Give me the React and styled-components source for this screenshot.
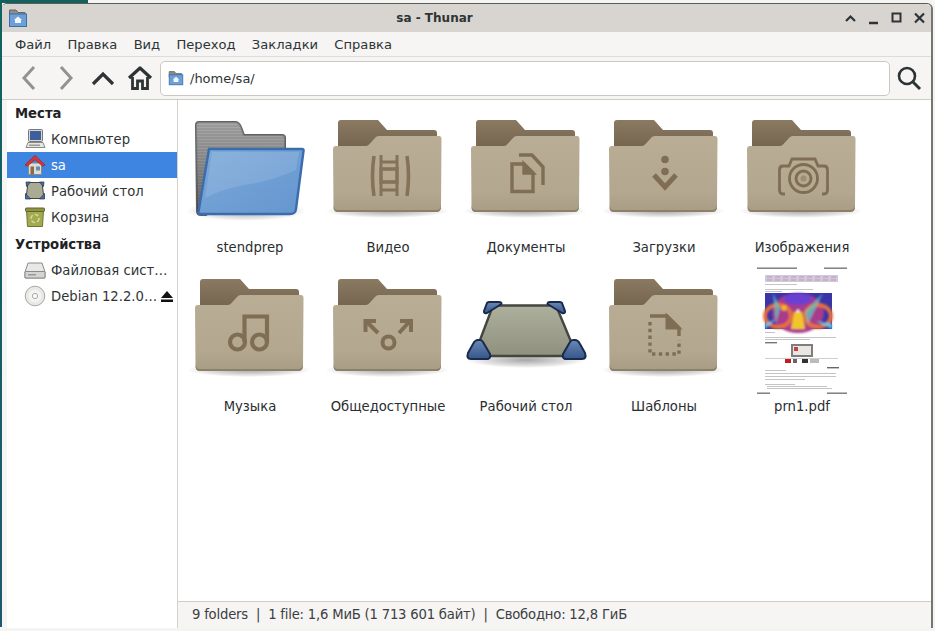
import React from 'react';
import styled, { createGlobalStyle } from 'styled-components';

const Global = createGlobalStyle`
  html, body { margin: 0; padding: 0; height: 100%; overflow: hidden; }
  body { background: #f4f4f2; font-family: "DejaVu Sans", sans-serif; }
  #root { height: 100%; }
`;

const Desktop = styled.div`
  width: 935px; height: 631px; box-sizing: border-box; padding: 3px 2px 4px 2px;
  background:
    linear-gradient(#11615f, #11615f) 0 0 / 88px 3px no-repeat,
    linear-gradient(#12625f, #1b5a6e) 0 0 / 2px 627px no-repeat;
`;
const Win = styled.div`
  height: 100%; display: flex; flex-direction: column; background: #f6f5f4;
  border-top: 1px solid #5e5c58; border-top-left-radius: 5px; border-top-right-radius: 6px;
  border-right: 2px solid #77756f; overflow: hidden;
`;
const TitleBar = styled.div`
  height: 28px; flex: none; background: #d8d4d0; display: flex; align-items: center;
  padding: 0 4px 0 6px; color: #2e3436;
`;
const Title = styled.div`flex: 1; text-align: center; font-size: 12px; font-weight: 700; color: #2e3436; padding-right: 2px;`;
const Ctl = styled.div`display: flex; gap: 8px; align-items: center;`;
const Menu = styled.div`
  height: 25px; flex: none; display: flex; align-items: center; gap: 16.3px; padding: 0 0 0 13px;
  font-size: 13.1px; color: #2e3436; border-bottom: 1px solid #dedcd9; box-sizing: border-box;
`;
const Toolbar = styled.div`
  height: 43px; flex: none; display: flex; align-items: center; padding: 0 4px 0 8px;
  border-bottom: 1px solid #cfccc7; box-sizing: border-box;
`;
const Tool = styled.div`width: 37px; height: 30px; display: flex; align-items: center; justify-content: center; flex: none;`;
const PathBox = styled.div`
  flex: 1; height: 35px; margin-left: 2px; box-sizing: border-box; background: #fff; border: 1px solid #cdc7c2; border-radius: 5px;
  display: flex; align-items: center; gap: 6px; padding-left: 7px; font-size: 13px; color: #2e3436;
`;
const Body = styled.div`flex: 1; min-height: 0; display: flex;`;
const Side = styled.div`width: 170px; margin-left: 5px; flex: none; background: #fff; border-right: 1px solid #d5d2ce;`;
const Head = styled.div`
  height: 26px; margin-top: ${p => p.$gap || 0}px; display: flex; align-items: center; padding-left: 8px;
  font-size: 13.2px; font-weight: 700; color: #1e2224;
`;
const Row = styled.div`
  height: 26px; display: flex; align-items: center; padding-left: 19px; gap: 5px; font-size: 13.2px;
  color: ${p => (p.$sel ? '#fff' : '#2e3436')}; background: ${p => (p.$sel ? '#3d85e0' : 'transparent')};
  white-space: nowrap; position: relative;
`;
const Eject = styled.div`position: absolute; right: 3px; top: 7px; display: flex;`;
const Ico = styled.span`width: 22px; height: 22px; flex: none; display: flex; margin-left: -2px;`;
const Main = styled.div`flex: 1; min-width: 0; display: flex; flex-direction: column; background: #fff;`;
const Grid = styled.div`
  flex: 1; display: grid; grid-template-columns: repeat(5, 138px); grid-auto-rows: 159px; padding: 15px 0 0 3px; align-content: start;
`;
const Cell = styled.div`display: flex; flex-direction: column; align-items: center;`;
const IconBox = styled.div`width: 128px; height: 110px; display: flex; flex: none;`;
const Label = styled.div`font-size: 13.2px; color: #2a2e30; margin-top: 15px; line-height: 16px; white-space: nowrap; position: relative;`;
const Status = styled.div`
  height: 27px; flex: none; box-sizing: border-box; border-top: 1px solid #cfccc7; background: #f6f5f4; display: flex; align-items: center;
  padding: 0 0 2px 14px; font-size: 13.2px; color: #3b4042; letter-spacing: -0.2px; white-space: nowrap;
`;

const Defs = () => (
  <svg width="0" height="0" style={{ position: 'absolute' }}>
    <defs>
      <linearGradient id="ffront" x1="0" y1="0" x2="0" y2="1">
        <stop offset="0" stopColor="#baad96" /><stop offset=".75" stopColor="#b4a78f" /><stop offset="1" stopColor="#a99c85" />
      </linearGradient>
      <linearGradient id="fback" x1="0" y1="0" x2="0" y2="1">
        <stop offset="0" stopColor="#8a7a62" /><stop offset="1" stopColor="#6f5f49" />
      </linearGradient>
      <radialGradient id="shadow"><stop offset="0" stopColor="#000" stopOpacity=".35" /><stop offset=".7" stopColor="#000" stopOpacity=".12" /><stop offset="1" stopColor="#000" stopOpacity="0" /></radialGradient>
      <linearGradient id="bluef" x1="0" y1="0" x2="1" y2="1">
        <stop offset="0" stopColor="#7ba8d8" /><stop offset=".6" stopColor="#6d9dd3" /><stop offset="1" stopColor="#6596ce" />
      </linearGradient>
      <linearGradient id="desk" x1="0" y1="0" x2="0" y2="1">
        <stop offset="0" stopColor="#aeb09e" /><stop offset="1" stopColor="#8f917e" />
      </linearGradient>
      <linearGradient id="cblue" x1="0" y1="0" x2="0" y2="1">
        <stop offset="0" stopColor="#6a89b5" /><stop offset="1" stopColor="#36558a" />
      </linearGradient>
      <pattern id="stripes" width="4" height="3" patternUnits="userSpaceOnUse">
        <rect width="4" height="3" fill="#7f7f7f" /><rect width="4" height="1" fill="#909090" />
      </pattern>
      <linearGradient id="greyshade" x1="0" y1="0" x2="0" y2="1">
        <stop offset="0" stopColor="#fff" stopOpacity=".22" /><stop offset="1" stopColor="#000" stopOpacity=".3" />
      </linearGradient>
      <filter id="blur1"><feGaussianBlur stdDeviation=".5" /></filter>
      <filter id="blur2"><feGaussianBlur stdDeviation=".9" /></filter>
    </defs>
  </svg>
);

const GC = '#7f6e54';
const glyphs = {
  video: (
    <g fill="none" stroke={GC} strokeWidth="3.6" opacity=".9">
      <path d="M50 41 Q47 61 50 81M83 41 Q86 61 83 81" />
      <path d="M57 40 V53M73 40 V53M57 68 V81M73 68 V81M57 47 H73M57 75 H73" strokeWidth="3" />
      <rect x="57" y="54" width="16" height="13" />
    </g>
  ),
  docs: (
    <g fill="none" stroke={GC} strokeWidth="3.4">
      <path d="M50 49 H62 L71 58 V76.5 H50 Z" />
      <path d="M62 49 V58 H71 Z" fill={GC} />
      <path d="M57 40 H70 L81 52 V70" />
    </g>
  ),
  down: (
    <g fill={GC}>
      <circle cx="65" cy="44.5" r="3.8" /><circle cx="65" cy="56.5" r="3.8" />
      <path d="M54 60 L65 72 L76 60" fill="none" stroke={GC} strokeWidth="5" />
    </g>
  ),
  photo: (
    <g fill="none" stroke={GC} strokeWidth="2.8">
      <path d="M47 79 H45 Q41.500 79 41.500 75 V55 Q41.500 51 45 51 H51 L54 44 H77 L80 51 H86 Q89.500 51 89.500 55 V75 Q89.500 79 86 79 H84" />
      <circle cx="65.500" cy="63.500" r="14" /><circle cx="65.500" cy="63.500" r="7.500" strokeWidth="3" />
      <circle cx="65.500" cy="63.500" r="3" fill={GC} opacity=".45" stroke="none" />
    </g>
  ),
  music: (
    <g fill="none" stroke={GC} strokeWidth="4.2">
      <circle cx="51.500" cy="68" r="7.500" /><circle cx="73.500" cy="68" r="7.500" />
      <path d="M58.500 68 V42.500 H81 V68" />
    </g>
  ),
  share: (
    <g fill="none" stroke={GC} strokeWidth="4">
      <circle cx="64.500" cy="68.500" r="6" />
      <path d="M54 59 L42 47M52 47 H41.500 V58M75 59 L86 47M76 47 H87 V58" />
    </g>
  ),
  tpl: (
    <g fill="none" stroke={GC}>
      <path d="M50 42 H67 L79 54 V62" strokeWidth="3.4" />
      <path d="M67 42 V54 H79 Z" fill={GC} strokeWidth="3" />
      <path d="M50 48 V80 H79 V66" strokeWidth="3.4" strokeDasharray="3.400 3.400" />
    </g>
  ),
};

const Folder = ({ g }) => (
  <svg width="128" height="110" viewBox="0 0 128 110">
    <ellipse cx="63" cy="96" rx="62" ry="7" fill="url(#shadow)" />
    <path d="M14 8 Q14 5 17 5 H54 L63 15 H110 Q113 15 113 18 V40 H14 Z" fill="url(#fback)" />
    <path d="M9 34 Q9 31 12 31 H42 Q44 31 45.500 29 L51 23 Q52.500 21 55 21 H115 Q117.500 21 117.500 24 L117 92 Q117 97 112 97 H14 Q9.500 97 9.500 92 Z" fill="url(#ffront)" />
    <path d="M9.500 92 Q9.500 97 14 97 H112 Q117 97 117 92 L117 90 Q117 95 112 95 H14 Q9.500 95 9.500 90 Z" fill="#8d8069" />
    {glyphs[g]}
  </svg>
);

const BlueFolder = () => (
  <svg width="128" height="110" viewBox="0 0 128 110">
    <ellipse cx="60" cy="96" rx="60" ry="10" fill="url(#shadow)" />
    <path d="M10 10 Q10 7 13 7 H49 Q53 7 55 12 L58 20 H96 Q99 20 99 23 V40 L20 100 H15 Q11 100 11 96 Z" fill="url(#stripes)" stroke="#5f5f5f" strokeWidth="2" />
    <path d="M10 10 Q10 7 13 7 H49 Q53 7 55 12 L58 20 H96 Q99 20 99 23 V40 L20 100 H15 Q11 100 11 96 Z" fill="url(#greyshade)" />
    <path d="M23 34 L116 34 Q118 34 117.500 36 L110 94 Q109.500 99 104 99 H13 Q12 99 12.500 97 Z" fill="url(#bluef)" stroke="#3b6cae" strokeWidth="2.400" />
    <path d="M26 37 H113 L110 55 Q90 64 70 68 Q40 72 19 83 Z" fill="#fff" opacity=".12" />
  </svg>
);

const DeskShape = () => (
  <svg width="128" height="110" viewBox="0 0 128 110">
    <ellipse cx="64" cy="86" rx="60" ry="8" fill="url(#shadow)" />
    <path d="M31 31.500 H94 L115 82 H12 Z" fill="url(#desk)" stroke="#44463f" strokeWidth="2.400" />
    <g fill="url(#cblue)" stroke="#1a2a4c" strokeWidth="2" strokeLinejoin="round">
      <path d="M22 37 L25 29 Q25.500 28 27 28 H37 Q39.500 28 39.500 30 L25 39 Q21.500 40 22 37 Z" />
      <path d="M103 37 L100 29 Q99.500 28 98 28 H88 Q85.500 28 85.500 30 L100 39 Q103.500 40 103 37 Z" />
      <path d="M6 79 L11 70 Q13 66 16 66 H18 Q20 66 21 68 L28 80 Q29 84 26 85 H9 Q4 85 6 79 Z" />
      <path d="M123 79 L118 70 Q116 66 113 66 H111 Q109 66 108 68 L101 80 Q100 84 103 85 H120 Q125 85 123 79 Z" />
    </g>
  </svg>
);

const Bars = ({ items, fill = '#c4c4c4' }) => items.map(([x, y, w, h = 1]) => <rect key={`${x}-${y}-${w}`} x={x} y={y} width={w} height={h} fill={fill} />);

const Pdf = () => (
  <svg width="128" height="132" viewBox="0 0 128 132" style={{ marginTop: -8, flex: 'none' }}>
    <g filter="url(#blur1)">
      <Bars fill="#777" items={[[19, 1.500, 40, 1.400], [86, 1.500, 23, 1.400], [19, 126.500, 13, 1.400], [89, 126.500, 20, 1.400]]} />
      <rect x="27" y="9" width="73" height="7" fill="#cfc8de" />
      <path d="M29 11 H98 M29 14 H98" stroke="#c49aa6" strokeWidth="1.200" strokeDasharray="5 3" />
      <Bars items={[[27, 18, 32], [27, 23, 48], [27, 25, 17], [27, 66, 10], [27, 71, 71], [27, 73, 45], [27, 92, 73, .8], [27, 104, 21], [27, 107, 71], [27, 110, 71], [27, 113, 40], [27, 118, 30], [29, 120, 60], [29, 122, 65]]} />
      <rect x="27" y="76" width="12" height="1.400" fill="#777" />
      <rect x="53" y="78" width="22" height="13" fill="#7e7e7e" /><rect x="55" y="80" width="18" height="9" fill="#eae6e2" /><rect x="56" y="81" width="4" height="4" fill="#c94040" />
      <rect x="47" y="93" width="6" height="4" fill="#c81e1e" /><rect x="55" y="93" width="4" height="4" fill="#666" /><rect x="64" y="93" width="6" height="4" fill="#333" /><rect x="72" y="93" width="9" height="4" fill="#bbb" />
      <rect x="89" y="101" width="12" height="1.400" fill="#667" />
    </g>
    <rect x="27" y="27" width="67" height="36" fill="#3a34a8" />
    <g filter="url(#blur2)">
      <ellipse cx="60" cy="47" rx="26" ry="20" fill="#a83a8c" />
      <ellipse cx="40" cy="50" rx="13" ry="11" fill="none" stroke="#e8703a" strokeWidth="4" />
      <ellipse cx="80" cy="50" rx="13" ry="11" fill="none" stroke="#e8703a" strokeWidth="4" />
      <ellipse cx="60" cy="33" rx="14" ry="6" fill="#6a3fd0" />
      <path d="M53 63 L56 46 H64 L67 63 Z" fill="#f2c62a" />
      <circle cx="46" cy="42" r="2.800" fill="#f4b81e" /><circle cx="60" cy="45" r="1.500" fill="#fff" />
      <path d="M35 27 L42 42 L38 58 Z M85 27 L67 46 L70 58 Z" fill="#5fc8c4" opacity=".75" />
      <path d="M27 58 L38 53 L27 63 Z M94 58 L78 55 L94 63 Z" fill="#5fc8e4" />
    </g>
  </svg>
);

const SmallFolder = ({ s = 16 }) => (
  <svg width={s} height={s} viewBox="0 0 20 20">
    <path d="M1.500 2 H8 L10 4.500 H17 V9 H1.500 Z" fill="#8b8d88" stroke="#666" />
    <rect x="1.500" y="6" width="17" height="12.500" fill="#6ea0d8" stroke="#3b6cae" />
    <path d="M6 12 L10 8.500 L14 12 H13 V15 H7 V12 Z" fill="#f2f6fb" />
  </svg>
);

const IComputer = () => (
  <svg width="22" height="22" viewBox="0 0 22 22">
    <rect x="4.500" y="1.500" width="14" height="12" rx="1" fill="#d8d8d4" stroke="#777" />
    <rect x="6" y="3" width="11" height="9" fill="#3d5f9b" />
    <path d="M4 14.500 H19 L21 19.500 H2 Z" fill="#e6e6e2" stroke="#8a8a86" />
    <rect x="5" y="16.500" width="11" height="1.500" fill="#999" />
  </svg>
);
const IHome = () => (
  <svg width="22" height="22" viewBox="0 0 22 22">
    <rect x="4.500" y="9" width="13" height="11.500" fill="#dcdcd8" stroke="#8a8a86" />
    <rect x="6.500" y="12.500" width="3.500" height="8" fill="#8b6a48" />
    <rect x="12" y="12.500" width="4" height="4" fill="#6d8aa8" />
    <path d="M1 11 L11 1.500 L21 11 L18.500 12 L11 5.500 L3.500 12 Z" fill="#d9363a" stroke="#a31e22" strokeWidth=".8" />
  </svg>
);
const IDesk = () => (
  <svg width="22" height="22" viewBox="0 0 22 22">
    <path d="M4 2.500 H18 L20 18.500 H2 Z" fill="#a9ab95" stroke="#44463f" />
    <g fill="#4e6f9e" stroke="#1f2f52" strokeWidth=".7">
      <path d="M2 2 H6.500 L2.500 6.500 Z" /><path d="M20 2 H15.500 L19.500 6.500 Z" />
      <path d="M1.500 19 V13.500 L6.500 19 Z" /><path d="M20.500 19 V13.500 L15.500 19 Z" />
    </g>
  </svg>
);
const ITrash = () => (
  <svg width="22" height="22" viewBox="0 0 22 22">
    <path d="M2.500 4 H19.500 L18.500 20.500 H3.500 Z" fill="#a4ab4e" stroke="#6e7432" />
    <rect x="1.500" y="2" width="19" height="3.500" rx="1" fill="#8e9442" stroke="#5e6430" />
    <circle cx="11" cy="12.500" r="4" fill="none" stroke="#d4d9a0" strokeWidth="1.500" strokeDasharray="4 2" />
  </svg>
);
const IDisk = () => (
  <svg width="22" height="22" viewBox="0 0 22 22">
    <path d="M4 4 H18 L21 13 V19 H1 V13 Z" fill="#e8e8e6" stroke="#8a8a86" />
    <rect x="1" y="12.500" width="20" height="6.500" rx="1" fill="#d4d4d2" stroke="#8a8a86" />
    <rect x="4" y="15" width="8" height="1.500" fill="#999" />
  </svg>
);
const ICd = () => (
  <svg width="22" height="22" viewBox="0 0 22 22">
    <circle cx="11" cy="11" r="9.800" fill="#e8e8e6" stroke="#a8a8a4" />
    <circle cx="11" cy="11" r="6.500" fill="#f3f3f1" />
    <circle cx="11" cy="11" r="2.600" fill="#fff" stroke="#a8a8a4" />
  </svg>
);

const folders = [
  ['stendprep', <BlueFolder />], ['Видео', <Folder g="video" />], ['Документы', <Folder g="docs" />],
  ['Загрузки', <Folder g="down" />], ['Изображения', <Folder g="photo" />], ['Музыка', <Folder g="music" />],
  ['Общедоступные', <Folder g="share" />], ['Рабочий стол', <DeskShape />], ['Шаблоны', <Folder g="tpl" />],
  ['prn1.pdf', <Pdf />],
];

export default function App() {
  return (
    <Desktop>
      <Global />
      <Defs />
      <Win>
        <TitleBar>
          <SmallFolder s={20} />
          <Title>sa - Thunar</Title>
          <Ctl>
            <svg width="15" height="14" viewBox="0 0 15 14"><path d="M3 10 L7.500 5.500 L12 10" fill="none" stroke="#2e3436" strokeWidth="2.200" /></svg>
            <svg width="15" height="14" viewBox="0 0 15 14"><path d="M3 12 H12" stroke="#2e3436" strokeWidth="2.400" /></svg>
            <svg width="15" height="14" viewBox="0 0 15 14"><rect x="3.500" y="2.500" width="8" height="8" fill="none" stroke="#2e3436" strokeWidth="2" /></svg>
            <svg width="15" height="14" viewBox="0 0 15 14"><path d="M3 2.500 L12 11.500 M12 2.500 L3 11.500" stroke="#2e3436" strokeWidth="2.200" /></svg>
          </Ctl>
        </TitleBar>
        <Menu>
          {['Файл', 'Правка', 'Вид', 'Переход', 'Закладки', 'Справка'].map(m => <span key={m}>{m}</span>)}
        </Menu>
        <Toolbar>
          <Tool><svg width="24" height="26" viewBox="0 0 24 26"><path d="M17 2 L7 13 L17 24" fill="none" stroke="#8f9394" strokeWidth="3" /></svg></Tool>
          <Tool><svg width="24" height="26" viewBox="0 0 24 26"><path d="M7 2 L17 13 L7 24" fill="none" stroke="#8f9394" strokeWidth="3" /></svg></Tool>
          <Tool><svg width="26" height="24" viewBox="0 0 26 24"><path d="M3 18 L13 8 L23 18" fill="none" stroke="#2e3436" strokeWidth="3.200" /></svg></Tool>
          <Tool><svg width="26" height="26" viewBox="0 0 26 26"><path d="M2 13 L13 3 L24 13" fill="none" stroke="#2e3436" strokeWidth="3.200" strokeLinejoin="round" /><path d="M5.500 12 V23.500 H10.500 V16 H15.500 V23.500 H20.500 V12" fill="none" stroke="#2e3436" strokeWidth="2.800" /></svg></Tool>
          <PathBox><SmallFolder />/home/sa/</PathBox>
          <Tool><svg width="26" height="26" viewBox="0 0 26 26"><circle cx="11" cy="11" r="8" fill="none" stroke="#2e3436" strokeWidth="2.600" /><path d="M16.500 16.500 L24 24" stroke="#2e3436" strokeWidth="3" /></svg></Tool>
        </Toolbar>
        <Body>
          <Side>
            <Head>Места</Head>
            <Row><Ico><IComputer /></Ico>Компьютер</Row>
            <Row $sel><Ico><IHome /></Ico>sa</Row>
            <Row><Ico><IDesk /></Ico>Рабочий стол</Row>
            <Row><Ico><ITrash /></Ico>Корзина</Row>
            <Head $gap={1}>Устройства</Head>
            <Row><Ico><IDisk /></Ico>Файловая сист…</Row>
            <Row><Ico><ICd /></Ico>Debian 12.2.0…<Eject><svg width="14" height="13" viewBox="0 0 14 13"><path d="M7 1 L13 8 H1 Z M1 9.500 H13 V12 H1 Z" fill="#111" /></svg></Eject></Row>
          </Side>
          <Main>
            <Grid>
              {folders.map(([n, i]) => (
                <Cell key={n}><IconBox>{i}</IconBox><Label>{n}</Label></Cell>
              ))}
            </Grid>
            <Status>9 folders &nbsp;|&nbsp; 1 file: 1,6 МиБ (1 713 601 байт) &nbsp;|&nbsp; Свободно: 12,8 ГиБ</Status>
          </Main>
        </Body>
      </Win>
    </Desktop>
  );
}
